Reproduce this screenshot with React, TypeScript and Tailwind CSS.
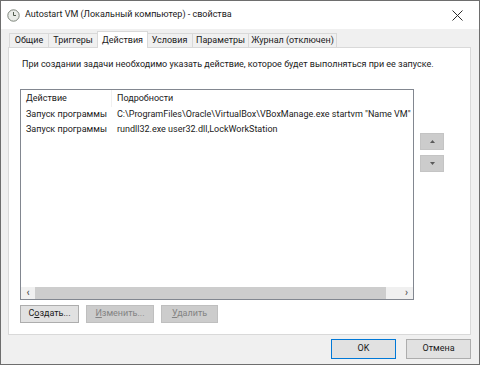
import React from "react";

const Tab = ({ label, w, active }: { label: string; w: number; active?: boolean }) => (
  <div
    style={{ width: w }}
    className={
      active
        ? "h-[17px] -mb-px relative z-10 bg-white border border-b-0 border-[#d9d9d9] flex items-center justify-center -mx-px"
        : "h-[14px] bg-[#f0f0f0] border border-b-0 border-[#d9d9d9] -ml-px first:ml-0 flex items-center justify-center"
    }
  >
    <span className="leading-none whitespace-nowrap">{label}</span>
  </div>
);

export default function App() {
  return (
    <div className="w-[480px] h-[365px] border border-[#6e6e6e] bg-[#f0f0f0] flex flex-col overflow-hidden text-[9px] text-[#1a1a1a] font-['Roboto',sans-serif]">
      {/* Title bar */}
      <div className="h-[28px] bg-white flex items-center pl-[6px] pr-[16px] shrink-0">
        <svg width="13" height="13" viewBox="0 0 13 13">
          <circle cx="6.5" cy="6.5" r="5.7" fill="#e9ece8" stroke="#7d847a" strokeWidth="1" />
          <path d="M6.5 3 V6.5 H9" stroke="#4f5a4c" strokeWidth="1" fill="none" />
        </svg>
        <span className="ml-[5px] text-[9px]">Autostart VM (Локальный компьютер) - свойства</span>
        <svg className="ml-auto" width="11" height="11" viewBox="0 0 11 11">
          <path d="M0.5 0.5 L10.5 10.5 M10.5 0.5 L0.5 10.5" stroke="#2b2b2b" strokeWidth="1" />
        </svg>
      </div>

      {/* Body */}
      <div className="flex-1 flex flex-col pl-[7px] pr-[8px] pt-[2px]">
        {/* tabs */}
        <div className="h-[16px] flex items-end pl-[1px] shrink-0">
          <Tab label="Общие" w={40} />
          <Tab label="Триггеры" w={50} />
          <Tab label="Действия" w={51} active />
          <Tab label="Условия" w={47} />
          <Tab label="Параметры" w={57} />
          <Tab label="Журнал (отключен)" w={89} />
        </div>

        {/* panel */}
        <div className="h-[288px] bg-white border border-[#d9d9d9] flex flex-col pl-[11px] shrink-0">
          <div className="mt-[9px] h-[16px] flex items-center pl-[2px] whitespace-nowrap">
            При создании задачи необходимо указать действие, которое будет выполняться при ее запуске.
          </div>
          <div className="mt-[16px] flex">
            {/* list */}
            <div className="w-[394px] h-[211px] border border-[#828790] bg-white flex flex-col">
              <div className="h-[17px] flex items-center">
                <div className="w-[91px] pl-[5px] border-r border-[#f0f0f0] h-full flex items-center">Действие</div>
                <div className="pl-[5px]">Подробности</div>
              </div>
              <div className="h-[15px] flex items-center whitespace-nowrap overflow-hidden">
                <div className="w-[91px] pl-[5px] shrink-0 overflow-hidden">Запуск программы</div>
                <div className="pl-[5px]">C:\ProgramFiles\Oracle\VirtualBox\VBoxManage.exe startvm "Name VM"</div>
              </div>
              <div className="h-[15px] flex items-center whitespace-nowrap overflow-hidden">
                <div className="w-[91px] pl-[5px] shrink-0 overflow-hidden">Запуск программы</div>
                <div className="pl-[5px]">rundll32.exe user32.dll,LockWorkStation</div>
              </div>
              <div className="flex-1" />
              {/* scrollbar */}
              <div className="h-[12px] flex bg-[#f0f0f0]">
                <div className="w-[14px] flex items-center justify-center text-[10px] font-bold text-[#505050] leading-none">‹</div>
                <div className="w-[351px] bg-[#cdcdcd]" />
                <div className="flex-1 flex items-center justify-end pr-[5px] text-[10px] font-bold text-[#606060] leading-none">›</div>
              </div>
            </div>
            {/* up/down */}
            <div className="ml-[6px] pt-[44px] flex flex-col gap-[5px]">
              <div className="w-[24px] h-[17px] bg-[#cccccc] border border-[#c4c4c4] flex items-center justify-center">
                <svg width="5" height="3" viewBox="0 0 5 3"><path d="M2.5 0 L5 3 H0 Z" fill="#5a5a5a" /></svg>
              </div>
              <div className="w-[24px] h-[17px] bg-[#cccccc] border border-[#c4c4c4] flex items-center justify-center">
                <svg width="5" height="3" viewBox="0 0 5 3"><path d="M0 0 H5 L2.5 3 Z" fill="#5a5a5a" /></svg>
              </div>
            </div>
          </div>
          <div className="mt-[5px] flex">
            <div className="w-[59px] h-[18px] bg-[#e1e1e1] border border-[#adadad] flex items-center justify-center">
              <span>С<u>о</u>здать...</span>
            </div>
            <div className="ml-[7px] w-[68px] h-[18px] bg-[#cccccc] border border-[#bfbfbf] flex items-center justify-center text-[#838383]">
              <span><u>И</u>зменить...</span>
            </div>
            <div className="ml-[7px] w-[57px] h-[18px] bg-[#cccccc] border border-[#bfbfbf] flex items-center justify-center text-[#838383]">
              <span><u>У</u>далить</span>
            </div>
          </div>
        </div>

        {/* footer */}
        <div className="flex justify-end pt-[4px] pr-[0px]">
          <div className="w-[65px] h-[20px] bg-[#e1e1e1] border border-[#0078d7] flex items-center justify-center">OK</div>
          <div className="ml-[10px] w-[65px] h-[20px] bg-[#e1e1e1] border border-[#adadad] flex items-center justify-center">Отмена</div>
        </div>
      </div>
    </div>
  );
}
